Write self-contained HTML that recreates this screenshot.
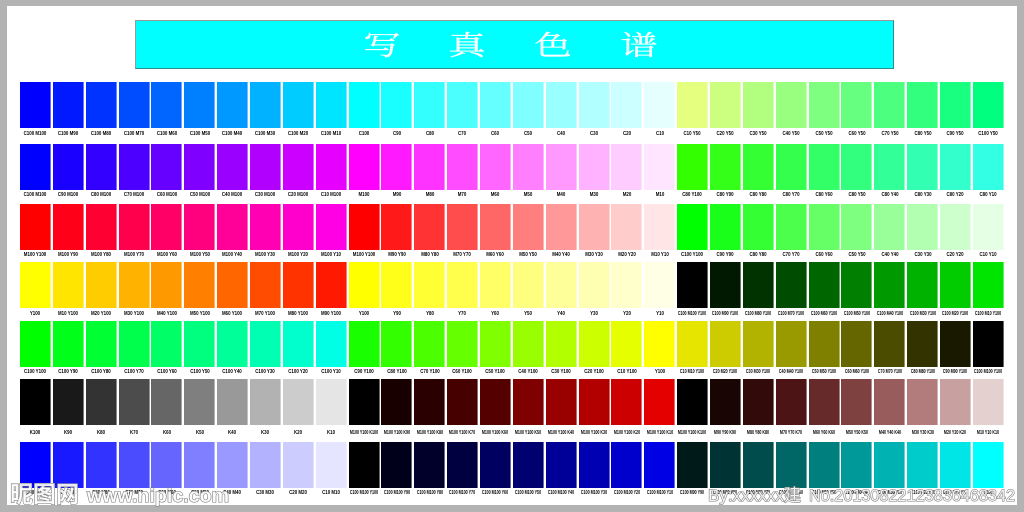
<!DOCTYPE html>
<html lang="zh"><head><meta charset="utf-8"><title>写真色谱</title>
<style>
html,body{margin:0;padding:0;background:#b3b3b3}
body{width:1024px;height:512px;overflow:hidden;position:relative;font-family:"Liberation Sans","Noto Sans CJK SC",sans-serif}
#w{position:absolute;left:0;top:0;width:1024px;height:512px;filter:blur(.3px);background:#b3b3b3}
#p{position:absolute;left:7px;top:6px;width:1010px;height:499px;background:#fff}
#t{position:absolute;left:135px;top:20px;width:757px;height:47px;background:#0ff;border-top:1px solid #999;border-left:1px solid #999;border-bottom:1px solid #2a8f8f;border-right:1px solid #2a8f8f;box-sizing:content-box}
#t i{position:absolute;top:6px;width:40px;font:normal 27px/34px "Noto Serif CJK SC",serif;color:#fff;text-align:center;transform:scaleX(1.38);-webkit-text-stroke:.3px #fff}
.r{position:absolute;left:20px;display:flex;height:62px}
.r b{display:block;flex:none;width:32.87px;height:62px;position:relative;background:linear-gradient(currentColor 0 0) 0 0/30.6px 46px no-repeat}
.r s{position:absolute;left:15.3px;top:var(--t);font:bold 5.5px/6px "Liberation Sans",sans-serif;color:#000;text-decoration:none;white-space:nowrap;transform:translateX(-50%) scaleX(.8)}
.r s.l{transform:translateX(-50%) scaleX(.66)}
svg{position:absolute;left:0;top:0}
svg text{paint-order:stroke;stroke:#7a7a7a;stroke-width:1.1px;fill:#fff;fill-opacity:.9}
</style></head><body>
<div id="w">
<div id="p"></div>
<div id="t"><i style="left:226px">写</i><i style="left:311px">真</i><i style="left:397px">色</i><i style="left:483px">谱</i></div>

<div class="r" style="top:82px;--t:49px">
<b style="color:#00f"><s>C100 M100</s></b><b style="color:#0019ff"><s>C100 M90</s></b><b style="color:#03f"><s>C100 M80</s></b><b style="color:#004cff"><s>C100 M70</s></b><b style="color:#06f"><s>C100 M60</s></b><b style="color:#007fff"><s>C100 M50</s></b><b style="color:#09f"><s>C100 M40</s></b><b style="color:#00b2ff"><s>C100 M30</s></b><b style="color:#0cf"><s>C100 M20</s></b><b style="color:#00e5ff"><s>C100 M10</s></b>
<b style="color:#0ff"><s>C100</s></b><b style="color:#19ffff"><s>C90</s></b><b style="color:#3ff"><s>C80</s></b><b style="color:#4cffff"><s>C70</s></b><b style="color:#6ff"><s>C60</s></b><b style="color:#7fffff"><s>C50</s></b><b style="color:#9ff"><s>C40</s></b><b style="color:#b2ffff"><s>C30</s></b><b style="color:#cff"><s>C20</s></b><b style="color:#e5ffff"><s>C10</s></b>
<b style="color:#e5ff7f"><s>C10 Y50</s></b><b style="color:#ccff7f"><s>C20 Y50</s></b><b style="color:#b2ff7f"><s>C30 Y50</s></b><b style="color:#99ff7f"><s>C40 Y50</s></b><b style="color:#7fff7f"><s>C50 Y50</s></b><b style="color:#66ff7f"><s>C60 Y50</s></b><b style="color:#4cff7f"><s>C70 Y50</s></b><b style="color:#33ff7f"><s>C80 Y50</s></b><b style="color:#19ff7f"><s>C90 Y50</s></b><b style="color:#00ff7f"><s>C100 Y50</s></b>
</div>

<div class="r" style="top:144px;--t:48px">
<b style="color:#00f"><s>C100 M100</s></b><b style="color:#1900ff"><s>C90 M100</s></b><b style="color:#30f"><s>C80 M100</s></b><b style="color:#4c00ff"><s>C70 M100</s></b><b style="color:#60f"><s>C60 M100</s></b><b style="color:#7f00ff"><s>C50 M100</s></b><b style="color:#90f"><s>C40 M100</s></b><b style="color:#b200ff"><s>C30 M100</s></b><b style="color:#c0f"><s>C20 M100</s></b><b style="color:#e500ff"><s>C10 M100</s></b>
<b style="color:#f0f"><s>M100</s></b><b style="color:#ff19ff"><s>M90</s></b><b style="color:#f3f"><s>M80</s></b><b style="color:#ff4cff"><s>M70</s></b><b style="color:#f6f"><s>M60</s></b><b style="color:#ff7fff"><s>M50</s></b><b style="color:#f9f"><s>M40</s></b><b style="color:#ffb2ff"><s>M30</s></b><b style="color:#fcf"><s>M20</s></b><b style="color:#ffe5ff"><s>M10</s></b>
<b style="color:#3f0"><s>C80 Y100</s></b><b style="color:#33ff19"><s>C80 Y90</s></b><b style="color:#3f3"><s>C80 Y80</s></b><b style="color:#33ff4c"><s>C80 Y70</s></b><b style="color:#3f6"><s>C80 Y60</s></b><b style="color:#33ff7f"><s>C80 Y50</s></b><b style="color:#3f9"><s>C80 Y40</s></b><b style="color:#33ffb2"><s>C80 Y30</s></b><b style="color:#3fc"><s>C80 Y20</s></b><b style="color:#33ffe5"><s>C80 Y10</s></b>
</div>

<div class="r" style="top:204px;--t:48px">
<b style="color:#f00"><s>M100 Y100</s></b><b style="color:#ff0019"><s>M100 Y90</s></b><b style="color:#f03"><s>M100 Y80</s></b><b style="color:#ff004c"><s>M100 Y70</s></b><b style="color:#f06"><s>M100 Y60</s></b><b style="color:#ff007f"><s>M100 Y50</s></b><b style="color:#f09"><s>M100 Y40</s></b><b style="color:#ff00b2"><s>M100 Y30</s></b><b style="color:#f0c"><s>M100 Y20</s></b><b style="color:#ff00e5"><s>M100 Y10</s></b>
<b style="color:#f00"><s>M100 Y100</s></b><b style="color:#ff1919"><s>M90 Y90</s></b><b style="color:#f33"><s>M80 Y80</s></b><b style="color:#ff4c4c"><s>M70 Y70</s></b><b style="color:#f66"><s>M60 Y60</s></b><b style="color:#ff7f7f"><s>M50 Y50</s></b><b style="color:#f99"><s>M40 Y40</s></b><b style="color:#ffb2b2"><s>M30 Y30</s></b><b style="color:#fcc"><s>M20 Y20</s></b><b style="color:#ffe5e5"><s>M10 Y10</s></b>
<b style="color:#0f0"><s>C100 Y100</s></b><b style="color:#19ff19"><s>C90 Y90</s></b><b style="color:#3f3"><s>C80 Y80</s></b><b style="color:#4cff4c"><s>C70 Y70</s></b><b style="color:#6f6"><s>C60 Y60</s></b><b style="color:#7fff7f"><s>C50 Y50</s></b><b style="color:#9f9"><s>C40 Y40</s></b><b style="color:#b2ffb2"><s>C30 Y30</s></b><b style="color:#cfc"><s>C20 Y20</s></b><b style="color:#e5ffe5"><s>C10 Y10</s></b>
</div>

<div class="r" style="top:262px;--t:49px">
<b style="color:#ff0"><s>Y100</s></b><b style="color:#ffe500"><s>M10 Y100</s></b><b style="color:#fc0"><s>M20 Y100</s></b><b style="color:#ffb200"><s>M30 Y100</s></b><b style="color:#f90"><s>M40 Y100</s></b><b style="color:#ff7f00"><s>M50 Y100</s></b><b style="color:#f60"><s>M60 Y100</s></b><b style="color:#ff4c00"><s>M70 Y100</s></b><b style="color:#f30"><s>M80 Y100</s></b><b style="color:#ff1900"><s>M90 Y100</s></b>
<b style="color:#ff0"><s>Y100</s></b><b style="color:#ffff19"><s>Y90</s></b><b style="color:#ff3"><s>Y80</s></b><b style="color:#ffff4c"><s>Y70</s></b><b style="color:#ff6"><s>Y60</s></b><b style="color:#ffff7f"><s>Y50</s></b><b style="color:#ff9"><s>Y40</s></b><b style="color:#ffffb2"><s>Y30</s></b><b style="color:#ffc"><s>Y20</s></b><b style="color:#ffffe5"><s>Y10</s></b>
<b style="color:#000"><s class="l">C100 M100 Y100</s></b><b style="color:#001900"><s class="l">C100 M90 Y100</s></b><b style="color:#030"><s class="l">C100 M80 Y100</s></b><b style="color:#004c00"><s class="l">C100 M70 Y100</s></b><b style="color:#060"><s class="l">C100 M60 Y100</s></b><b style="color:#007f00"><s class="l">C100 M50 Y100</s></b><b style="color:#090"><s class="l">C100 M40 Y100</s></b><b style="color:#00b200"><s class="l">C100 M30 Y100</s></b><b style="color:#0c0"><s class="l">C100 M20 Y100</s></b><b style="color:#00e500"><s class="l">C100 M10 Y100</s></b>
</div>

<div class="r" style="top:321px;--t:48px">
<b style="color:#0f0"><s>C100 Y100</s></b><b style="color:#00ff19"><s>C100 Y90</s></b><b style="color:#0f3"><s>C100 Y80</s></b><b style="color:#00ff4c"><s>C100 Y70</s></b><b style="color:#0f6"><s>C100 Y60</s></b><b style="color:#00ff7f"><s>C100 Y50</s></b><b style="color:#0f9"><s>C100 Y40</s></b><b style="color:#00ffb2"><s>C100 Y30</s></b><b style="color:#0fc"><s>C100 Y20</s></b><b style="color:#00ffe5"><s>C100 Y10</s></b>
<b style="color:#19ff00"><s>C90 Y100</s></b><b style="color:#3f0"><s>C80 Y100</s></b><b style="color:#4cff00"><s>C70 Y100</s></b><b style="color:#6f0"><s>C60 Y100</s></b><b style="color:#7fff00"><s>C50 Y100</s></b><b style="color:#9f0"><s>C40 Y100</s></b><b style="color:#b2ff00"><s>C30 Y100</s></b><b style="color:#cf0"><s>C20 Y100</s></b><b style="color:#e5ff00"><s>C10 Y100</s></b><b style="color:#ff0"><s>Y100</s></b>
<b style="color:#e5e500"><s class="l">C10 M10 Y100</s></b><b style="color:#cc0"><s class="l">C20 M20 Y100</s></b><b style="color:#b2b200"><s class="l">C30 M30 Y100</s></b><b style="color:#990"><s class="l">C40 M40 Y100</s></b><b style="color:#7f7f00"><s class="l">C50 M50 Y100</s></b><b style="color:#660"><s class="l">C60 M60 Y100</s></b><b style="color:#4c4c00"><s class="l">C70 M70 Y100</s></b><b style="color:#330"><s class="l">C80 M80 Y100</s></b><b style="color:#191900"><s class="l">C90 M90 Y100</s></b><b style="color:#000"><s class="l">C100 M100 Y100</s></b>
</div>

<div class="r" style="top:379px;--t:51px">
<b style="color:#000"><s>K100</s></b><b style="color:#191919"><s>K90</s></b><b style="color:#333"><s>K80</s></b><b style="color:#4c4c4c"><s>K70</s></b><b style="color:#666"><s>K60</s></b><b style="color:#7f7f7f"><s>K50</s></b><b style="color:#999"><s>K40</s></b><b style="color:#b2b2b2"><s>K30</s></b><b style="color:#ccc"><s>K20</s></b><b style="color:#e5e5e5"><s>K10</s></b>
<b style="color:#000"><s class="l">M100 Y100 K100</s></b><b style="color:#190000"><s class="l">M100 Y100 K90</s></b><b style="color:#2a0000"><s class="l">M100 Y100 K80</s></b><b style="color:#470000"><s class="l">M100 Y100 K70</s></b><b style="color:#550000"><s class="l">M100 Y100 K60</s></b><b style="color:#7f0000"><s class="l">M100 Y100 K50</s></b><b style="color:#900"><s class="l">M100 Y100 K40</s></b><b style="color:#b20000"><s class="l">M100 Y100 K30</s></b><b style="color:#c00"><s class="l">M100 Y100 K20</s></b><b style="color:#e50000"><s class="l">M100 Y100 K10</s></b>
<b style="color:#000"><s class="l">M100 Y100 K100</s></b><b style="color:#1a0505"><s class="l">M90 Y90 K90</s></b><b style="color:#330a0a"><s class="l">M80 Y80 K80</s></b><b style="color:#4c1414"><s class="l">M70 Y70 K70</s></b><b style="color:#662a2a"><s class="l">M60 Y60 K60</s></b><b style="color:#7f4040"><s class="l">M50 Y50 K50</s></b><b style="color:#995c5c"><s class="l">M40 Y40 K40</s></b><b style="color:#b27c7c"><s class="l">M30 Y30 K30</s></b><b style="color:#c8a0a0"><s class="l">M20 Y20 K20</s></b><b style="color:#e5d0d0"><s class="l">M10 Y10 K10</s></b>
</div>

<div class="r" style="top:442px;--t:48px">
<b style="color:#00f"><s>C100 M100</s></b><b style="color:#1919ff"><s>C90 M90</s></b><b style="color:#33f"><s>C80 M80</s></b><b style="color:#4c4cff"><s>C70 M70</s></b><b style="color:#66f"><s>C60 M60</s></b><b style="color:#7f7fff"><s>C50 M50</s></b><b style="color:#99f"><s>C40 M40</s></b><b style="color:#b2b2ff"><s>C30 M30</s></b><b style="color:#ccf"><s>C20 M20</s></b><b style="color:#e5e5ff"><s>C10 M10</s></b>
<b style="color:#000"><s class="l">C100 M100 Y100</s></b><b style="color:#00001a"><s class="l">C100 M100 Y90</s></b><b style="color:#00002a"><s class="l">C100 M100 Y80</s></b><b style="color:#000040"><s class="l">C100 M100 Y70</s></b><b style="color:#000060"><s class="l">C100 M100 Y60</s></b><b style="color:#000070"><s class="l">C100 M100 Y50</s></b><b style="color:#009"><s class="l">C100 M100 Y40</s></b><b style="color:#0000b2"><s class="l">C100 M100 Y30</s></b><b style="color:#00c"><s class="l">C100 M100 Y20</s></b><b style="color:#0000e5"><s class="l">C100 M100 Y10</s></b>
<b style="color:#001a1a"><s class="l">C100 M90 Y90</s></b><b style="color:#033"><s class="l">C100 M80 Y80</s></b><b style="color:#004c4c"><s class="l">C100 M70 Y70</s></b><b style="color:#066"><s class="l">C100 M60 Y60</s></b><b style="color:#007f7f"><s class="l">C100 M50 Y50</s></b><b style="color:#099"><s class="l">C100 M40 Y40</s></b><b style="color:#00b2b2"><s class="l">C100 M30 Y30</s></b><b style="color:#0cc"><s class="l">C100 M20 Y20</s></b><b style="color:#00e5e5"><s class="l">C100 M10 Y10</s></b><b style="color:#0ff"><s class="l">C100</s></b>
</div>

<svg width="1024" height="512" viewBox="0 0 1024 512">
<text x="10" y="502" font-family="'Noto Sans CJK SC',sans-serif" font-size="23" font-weight="700" textLength="69" lengthAdjust="spacingAndGlyphs">昵图网</text>
<text x="87" y="502" font-family="'Liberation Sans',sans-serif" font-size="19" font-weight="700" textLength="142" lengthAdjust="spacingAndGlyphs">www.nipic.com</text>
<text x="708" y="501" font-family="'Liberation Sans','Noto Sans CJK SC',sans-serif" font-size="17" textLength="93" lengthAdjust="spacingAndGlyphs">By:xxxxxx建</text>
<text x="809" y="501" font-family="'Liberation Sans',sans-serif" font-size="17" textLength="206" lengthAdjust="spacingAndGlyphs">No:20130822123836468342</text>
</svg>
</div>
</body></html>
